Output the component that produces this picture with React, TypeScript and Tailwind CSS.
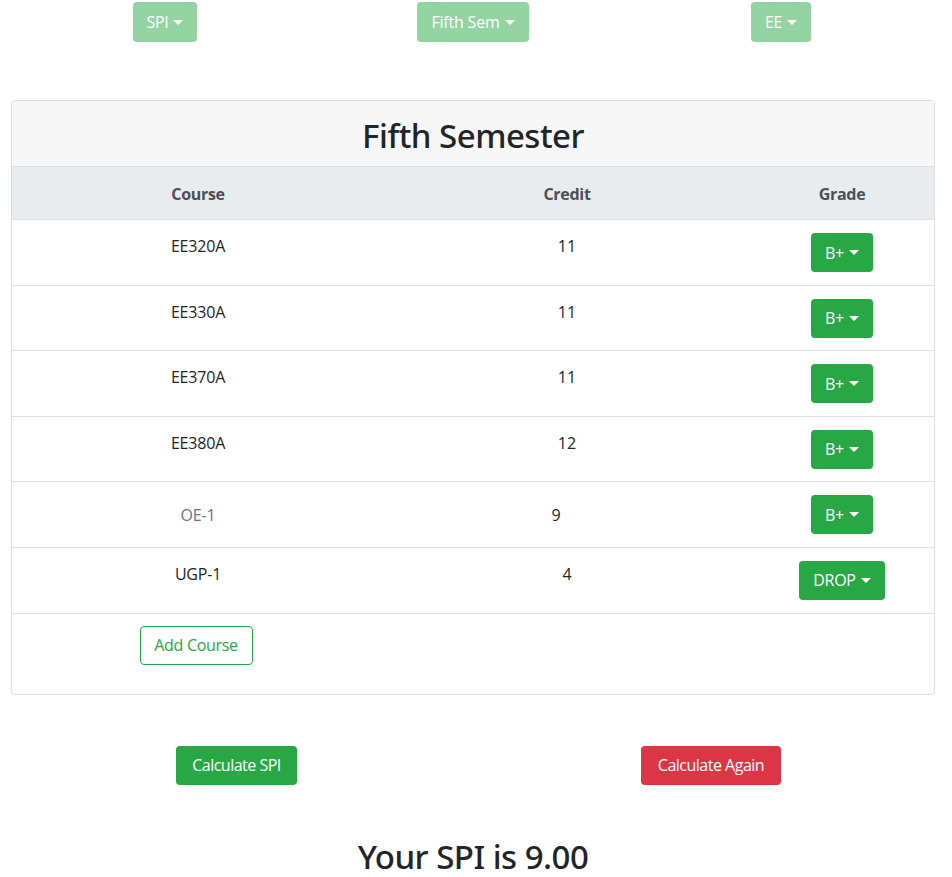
import { ReactNode } from "react"

interface CourseRow {
  course: string
  credit: string
  grade: string
  muted?: boolean
  center?: boolean
  creditShift?: boolean
  textTop?: string
}

const rows: CourseRow[] = [
  { course: "EE320A", credit: "11", grade: "B+" },
  { course: "EE330A", credit: "11", grade: "B+" },
  { course: "EE370A", credit: "11", grade: "B+" },
  { course: "EE380A", credit: "12", grade: "B+" },
  { course: "OE-1", credit: "9", grade: "B+", muted: true, center: true, creditShift: true },
  { course: "UGP-1", credit: "4", grade: "DROP", textTop: "pt-[14px]" },
]

function Caret() {
  return (
    <span className="ml-[5px] inline-block w-0 h-0 border-t-[5px] border-t-white border-x-[5px] border-x-transparent align-middle" />
  )
}

function GreenButton({ children, faded }: { children: ReactNode; faded?: boolean }) {
  return (
    <button
      className={
        "inline-flex items-center px-[14px] rounded-[4px] text-white text-[16px] leading-6 " +
        (faded ? "h-[40px] bg-[#94d3a2]" : "h-[39px] bg-[#28a745]")
      }
    >
      {children}
    </button>
  )
}

export default function App() {
  return (
    <div className="bg-white text-[#212529] font-['Open_Sans','Noto_Sans',sans-serif]">
      {/* Top dropdowns */}
      <div className="mx-[11px] w-[924px] pt-[2px] grid grid-cols-3">
        <div className="flex justify-center">
          <GreenButton faded>
            <span className="tracking-[-0.3px]">SPI</span>
            <Caret />
          </GreenButton>
        </div>
        <div className="flex justify-center">
          <GreenButton faded>
            <span className="tracking-[-0.2px]">Fifth Sem</span>
            <Caret />
          </GreenButton>
        </div>
        <div className="flex justify-center">
          <GreenButton faded>
            <span className="tracking-[-0.3px]">EE</span>
            <Caret />
          </GreenButton>
        </div>
      </div>

      {/* Semester card */}
      <div className="mx-[11px] mt-[58px] w-[924px] border border-[#dfdfdf] rounded-[4px] overflow-hidden">
        <div className="h-[66px] bg-[#f7f7f7] border-b border-[#dfdfdf] flex items-center justify-center pt-[3px]">
          <h2 className="text-[33px] leading-none font-medium tracking-[-0.5px] text-[#212529] font-['Noto_Sans','Open_Sans',sans-serif]">
            Fifth Semester
          </h2>
        </div>

        <div className="grid grid-cols-[372px_366px_1fr] h-[53px] bg-[#e9ecef] border-b border-[#dee2e6] text-[#495057] font-bold text-[16px] pt-[2px]">
          <div className="flex items-center justify-center tracking-[-0.3px]">Course</div>
          <div className="flex items-center justify-center tracking-[-0.3px]">Credit</div>
          <div className="flex items-center justify-center tracking-[-0.3px]">Grade</div>
        </div>

        {rows.map((r) => (
          <div key={r.course} className="grid grid-cols-[372px_366px_1fr] h-[65.6px] border-b border-[#dee2e6] text-[16px] leading-6">
            <div
              className={
                "text-center tracking-[-0.2px] " +
                (r.center ? "flex items-center justify-center " : (r.textTop ?? "pt-[14px]") + " ") +
                (r.muted ? "text-[#6c757d]" : "text-[#212529]")
              }
            >
              {r.course}
            </div>
            <div
              className={
                "text-center " +
                (r.center ? "flex items-center justify-center " : (r.textTop ?? "pt-[14px]") + " ") +
                (r.creditShift ? "pr-[22px]" : "")
              }
            >
              {r.credit}
            </div>
            <div className="flex justify-center pt-[13px]">
              <GreenButton>
                <span className="tracking-[-0.3px]">{r.grade}</span>
                <Caret />
              </GreenButton>
            </div>
          </div>
        ))}

        <div className="h-[80px] grid grid-cols-[372px_366px_1fr]">
          <div className="flex justify-center pt-[12px] pr-[4px]">
            <button className="h-[39px] w-[113px] rounded-[4px] border border-[#28a745] text-[#28a745] text-[16px] leading-6 tracking-[-0.3px] bg-white">
              Add Course
            </button>
          </div>
        </div>
      </div>

      {/* Action buttons */}
      <div className="mt-[51px] grid grid-cols-2">
        <div className="flex justify-center pr-[3px]">
          <button className="h-[39px] w-[121px] rounded-[4px] bg-[#28a745] text-white text-[16px] leading-6 tracking-[-0.5px]">
            Calculate SPI
          </button>
        </div>
        <div className="flex justify-center pr-[6px]">
          <button className="h-[39px] w-[140px] rounded-[4px] bg-[#dc3545] text-white text-[16px] leading-6 tracking-[-0.5px]">
            Calculate Again
          </button>
        </div>
      </div>

      <div className="mt-[55px] w-[946px] text-center">
        <h2 className="text-[33px] leading-none font-medium tracking-[-0.5px] text-[#212529] font-['Noto_Sans','Open_Sans',sans-serif]">
          Your SPI is 9.00
        </h2>
      </div>
    </div>
  )
}
